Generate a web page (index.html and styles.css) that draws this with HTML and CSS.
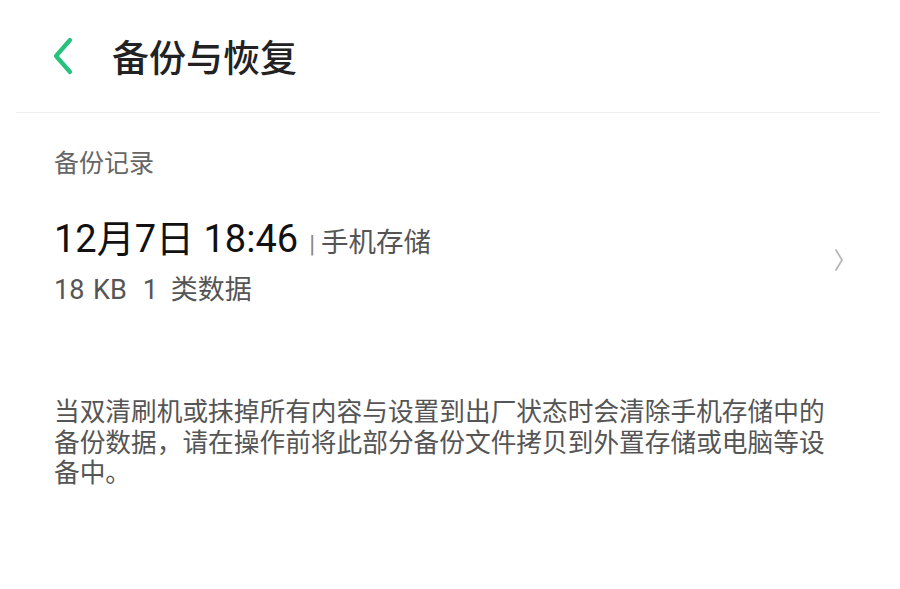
FILE: index.html
```html
<!DOCTYPE html>
<html lang="zh-CN">
<head>
<meta charset="utf-8">
<title>备份与恢复</title>
<link rel="stylesheet" href="styles.css">
</head>
<body>
<div class="page">
  <header class="header">
    <span class="back" aria-label="返回">
      <svg width="22" height="38" viewBox="0 0 22 38"><path d="M18 3 L4 19 L18 35" fill="none" stroke="#25c27c" stroke-width="4.2" stroke-linecap="round" stroke-linejoin="round"/></svg>
    </span>
    <h1 class="title">备份与恢复</h1>
  </header>

  <div class="section-label">备份记录</div>

  <div class="record">
    <div class="record-info">
      <div class="record-main"><span class="record-time">12月7日 18:46</span><span class="record-sep">|</span><span class="record-loc">手机存储</span></div>
      <div class="record-sub"><span class="sub-size">18 KB</span><span class="sub-count">1 类数据</span></div>
    </div>
    <span class="record-arrow">
      <svg width="10" height="24" viewBox="0 0 10 24"><path d="M2 2 L8 12 L2 22" fill="none" stroke="#b8b8b8" stroke-width="1.8" stroke-linecap="round" stroke-linejoin="round"/></svg>
    </span>
  </div>

  <p class="note">当双清刷机或抹掉所有内容与设置到出厂状态时会清除手机存储中的备份数据，请在操作前将此部分备份文件拷贝到外置存储或电脑等设备中。</p>
</div>
</body>
</html>
```

FILE: styles.css
```css
html, body {
  margin: 0;
  padding: 0;
  background: #ffffff;
}
body {
  font-family: "Roboto", "Noto Sans CJK SC", sans-serif;
  width: 900px;
  height: 589px;
  overflow: hidden;
}
.header {
  display: flex;
  align-items: center;
  height: 113px;
  margin: 0 20px 0 16px;
  border-bottom: 1px solid #eeeeee;
  box-sizing: border-box;
}
.back {
  display: flex;
  width: 22px;
  height: 38px;
  margin-left: 36px;
  margin-top: -1px;
}
.title {
  margin: 0 0 0 38px;
  font-family: "Noto Sans CJK SC", sans-serif;
  font-size: 37px;
  font-weight: 500;
  color: #222222;
  line-height: 1;
}
.section-label {
  margin: 30px 0 0 54px;
  font-family: "Noto Sans CJK SC", sans-serif;
  font-size: 25px;
  line-height: 36px;
  color: #666666;
}
.record {
  display: flex;
  align-items: center;
  justify-content: space-between;
  margin-top: 37px;
  padding: 0 56px 0 54px;
}
.record-main {
  display: flex;
  align-items: baseline;
  line-height: 46px;
}
.record-time {
  font-size: 38px;
  color: #111111;
}
.record-sep {
  font-size: 24px;
  color: #888888;
  margin: 0 6px 0 11px;
}
.record-loc {
  font-family: "Noto Sans CJK SC", sans-serif;
  font-size: 27.5px;
  color: #555555;
}
.record-sub {
  display: flex;
  align-items: baseline;
  margin-top: 6px;
  font-size: 27px;
  line-height: 34px;
  color: #555555;
}
.sub-size {
  word-spacing: 2px;
}
.sub-count {
  margin-left: 16px;
  word-spacing: 6px;
}
.record-arrow {
  display: flex;
  margin-top: -4px;
}
.note {
  margin: 88px 0 0 54px;
  width: 792px;
  font-family: "Noto Sans CJK SC", sans-serif;
  font-size: 25.7px;
  line-height: 30.5px;
  color: #555555;
}
```
